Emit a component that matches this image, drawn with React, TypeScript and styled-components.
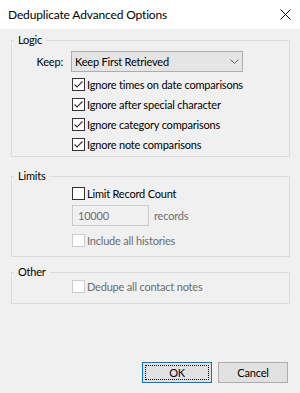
import React from 'react'
import styled, { createGlobalStyle } from 'styled-components'

const GlobalStyle = createGlobalStyle`
  body {
    margin: 0;
    background: #f0f0f0;
  }
`

const FONT = `"Segoe UI", Lato, "Noto Sans", sans-serif`

const Dialog = styled.div`
  width: 300px;
  height: 393px;
  display: flex;
  flex-direction: column;
  background: #f0f0f0;
  font-family: ${FONT};
  font-size: 11px;
  letter-spacing: -0.2px;
  color: #000;
  overflow: hidden;
`

const TitleBar = styled.div`
  height: 29px;
  flex: none;
  background: #fff;
  display: flex;
  align-items: center;
  justify-content: space-between;
  padding: 0 9px 0 8px;
`

const Title = styled.span`
  font-size: 12px;
  letter-spacing: -0.15px;
  line-height: 16px;
`

const Body = styled.div`
  flex: 1;
  display: flex;
  flex-direction: column;
  padding: 3px 10px 10px 11px;
`

type GroupBoxProps = {
  $mt: number
  $pb: number
}

const GroupBox = styled.fieldset<GroupBoxProps>`
  margin: ${({ $mt }) => $mt}px 0 0 0;
  padding: 0 0 ${({ $pb }) => $pb}px 0;
  border: 1px solid #dcdcdc;
  min-width: 0;
`

const Legend = styled.legend`
  margin-left: 2px;
  padding: 0 4px;
  line-height: 16px;
`

const KeepRow = styled.div`
  display: grid;
  grid-template-columns: 59px 172px;
  align-items: center;
  margin-top: 3px;
`

const FieldLabel = styled.span`
  text-align: right;
  padding-right: 8px;
`

const ComboBox = styled.div`
  height: 21px;
  box-sizing: border-box;
  border: 1px solid #adadad;
  background: #e5e5e5;
  display: flex;
  align-items: center;
  justify-content: space-between;
  padding: 0 3px 0 3px;
`

type IndentProps = {
  $mt?: number
}

const Indent = styled.div<IndentProps>`
  display: flex;
  flex-direction: column;
  align-items: flex-start;
  padding-left: 60px;
  margin-top: ${({ $mt }) => $mt ?? 0}px;
`

type CheckRowProps = {
  $mt?: number
  $disabled?: boolean
}

const CheckRow = styled.label<CheckRowProps>`
  height: 20px;
  display: flex;
  align-items: center;
  gap: 2px;
  margin-top: ${({ $mt }) => $mt ?? 0}px;
  color: ${({ $disabled }) => ($disabled ? '#6d6d6d' : '#000')};
  white-space: nowrap;
`

type BoxProps = {
  $disabled?: boolean
}

const Box = styled.span<BoxProps>`
  width: 13px;
  height: 13px;
  box-sizing: border-box;
  border: 1px solid ${({ $disabled }) => ($disabled ? '#cccccc' : '#333333')};
  background: #fff;
  display: flex;
  align-items: center;
  justify-content: center;
  flex: none;
`

const InputRow = styled.div`
  display: flex;
  align-items: center;
  gap: 5px;
  margin-top: 2px;
  color: #6d6d6d;
`

const TextInput = styled.div`
  width: 77px;
  height: 21px;
  box-sizing: border-box;
  border: 1px solid #cccccc;
  background: #f0f0f0;
  display: flex;
  align-items: center;
  padding-left: 5px;
  color: #6d6d6d;
`

const ButtonRow = styled.div`
  margin-top: auto;
  display: flex;
  justify-content: flex-end;
  gap: 6px;
  padding-right: 2px;
`

type ButtonProps = {
  $default?: boolean
}

const Button = styled.button<ButtonProps>`
  width: 70px;
  height: 21px;
  box-sizing: border-box;
  border: 1px solid ${({ $default }) => ($default ? '#0078d7' : '#adadad')};
  background: #e1e1e1;
  font-family: ${FONT};
  font-size: 11px;
  letter-spacing: -0.2px;
  color: #000;
  padding: 0;
  position: relative;
  display: flex;
  align-items: center;
  justify-content: center;
`

const FocusRing = styled.span`
  position: absolute;
  inset: 2px;
  border: 1px dotted #000;
`

const CloseIcon: React.FC = () => (
  <svg width="11" height="11" viewBox="0 0 11 11">
    <path d="M0.5 0.5 L10.5 10.5 M10.5 0.5 L0.5 10.5" stroke="#000" strokeWidth="1" />
  </svg>
)

const ChevronIcon: React.FC = () => (
  <svg width="9" height="5" viewBox="0 0 9 5">
    <path d="M0.5 0.5 L4.5 4.5 L8.5 0.5" stroke="#606060" strokeWidth="1" fill="none" />
  </svg>
)

type CheckOptionProps = {
  label: string
  checked?: boolean
  disabled?: boolean
  mt?: number
}

const CheckOption: React.FC<CheckOptionProps> = ({ label, checked, disabled, mt }) => {
  return (
    <CheckRow $mt={mt} $disabled={disabled}>
      <Box $disabled={disabled}>
        {checked && (
          <svg width="11" height="11" viewBox="0 0 11 11">
            <path d="M1.5 5.5 L4 8 L9.5 2.5" stroke="#333" strokeWidth="1.1" fill="none" />
          </svg>
        )}
      </Box>
      <span>{label}</span>
    </CheckRow>
  )
}

const App: React.FC = () => {
  return (
    <>
      <GlobalStyle />
      <Dialog>
        <TitleBar>
          <Title>Deduplicate Advanced Options</Title>
          <CloseIcon />
        </TitleBar>
        <Body>
          <GroupBox $mt={0} $pb={2}>
            <Legend>Logic</Legend>
            <KeepRow>
              <FieldLabel>Keep:</FieldLabel>
              <ComboBox>
                <span>Keep First Retrieved</span>
                <ChevronIcon />
              </ComboBox>
            </KeepRow>
            <Indent $mt={2}>
              <CheckOption label="Ignore times on date comparisons" checked />
              <CheckOption label="Ignore after special character" checked />
              <CheckOption label="Ignore category comparisons" checked />
              <CheckOption label="Ignore note comparisons" checked />
            </Indent>
          </GroupBox>

          <GroupBox $mt={11} $pb={6}>
            <Legend>Limits</Legend>
            <Indent $mt={-1}>
              <CheckOption label="Limit Record Count" />
              <InputRow>
                <TextInput>10000</TextInput>
                <span>records</span>
              </InputRow>
              <CheckOption label="Include all histories" disabled mt={4} />
            </Indent>
          </GroupBox>

          <GroupBox $mt={7} $pb={7}>
            <Legend>Other</Legend>
            <Indent $mt={-4}>
              <CheckOption label="Dedupe all contact notes" disabled />
            </Indent>
          </GroupBox>

          <ButtonRow>
            <Button $default>
              <FocusRing />
              OK
            </Button>
            <Button>Cancel</Button>
          </ButtonRow>
        </Body>
      </Dialog>
    </>
  )
}

export default App
